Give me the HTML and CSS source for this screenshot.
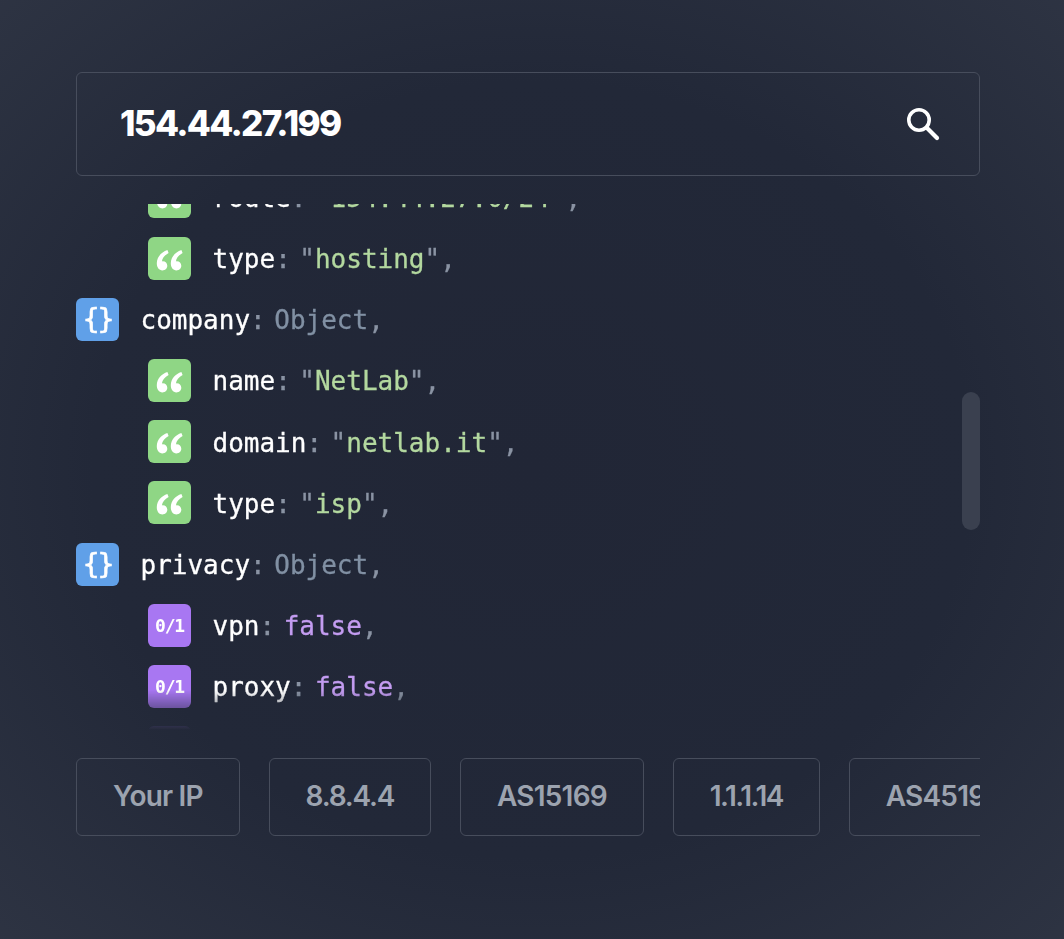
FILE: index.html
```html
<!DOCTYPE html>
<html lang="en">
<head>
<meta charset="utf-8">
<title>IP lookup</title>
<link rel="stylesheet" href="styles.css">
</head>
<body>
<main class="page">
  <div class="search">
    <span class="search-value">154.44.27.199</span>
    <svg class="search-icon" viewBox="0 0 34 34" aria-hidden="true"><circle cx="13" cy="13" r="10.2" fill="none" stroke="#fff" stroke-width="3.6"/><path d="M20.8 20.8 L31 31" fill="none" stroke="#fff" stroke-width="4.2" stroke-linecap="round"/></svg>
  </div>
  <div class="viewer">
    <div class="scroller">
      <div class="tree">
        <div class="row child"><span class="icon str"><svg viewBox="0 0 43 43"><use href="#q"/></svg></span><span class="key">route</span><span class="colon">:</span><span class="punct">"</span><span class="string">154.44.27.0/24</span><span class="punct">",</span></div>
        <div class="row child"><span class="icon str"><svg viewBox="0 0 43 43"><use href="#q"/></svg></span><span class="key">type</span><span class="colon">:</span><span class="punct">"</span><span class="string">hosting</span><span class="punct">",</span></div>
        <div class="row"><span class="icon obj">{}</span><span class="key">company</span><span class="colon">:</span><span class="object">Object</span><span class="punct">,</span></div>
        <div class="row child"><span class="icon str"><svg viewBox="0 0 43 43"><use href="#q"/></svg></span><span class="key">name</span><span class="colon">:</span><span class="punct">"</span><span class="string">NetLab</span><span class="punct">",</span></div>
        <div class="row child"><span class="icon str"><svg viewBox="0 0 43 43"><use href="#q"/></svg></span><span class="key">domain</span><span class="colon">:</span><span class="punct">"</span><span class="string">netlab.it</span><span class="punct">",</span></div>
        <div class="row child"><span class="icon str"><svg viewBox="0 0 43 43"><use href="#q"/></svg></span><span class="key">type</span><span class="colon">:</span><span class="punct">"</span><span class="string">isp</span><span class="punct">",</span></div>
        <div class="row"><span class="icon obj">{}</span><span class="key">privacy</span><span class="colon">:</span><span class="object">Object</span><span class="punct">,</span></div>
        <div class="row child"><span class="icon bool">0/1</span><span class="key">vpn</span><span class="colon">:</span><span class="boolean">false</span><span class="punct">,</span></div>
        <div class="row child"><span class="icon bool">0/1</span><span class="key">proxy</span><span class="colon">:</span><span class="boolean">false</span><span class="punct">,</span></div>
        <div class="row child"><span class="icon bool">0/1</span><span class="key">tor</span><span class="colon">:</span><span class="boolean">false</span><span class="punct">,</span></div>
      </div>
    </div>
    <div class="thumb"></div>
  </div>
  <div class="chips">
    <button class="chip chip-word">Your IP</button>
    <button class="chip chip-digits">8.8.4.4</button>
    <button class="chip chip-as">AS15169</button>
    <button class="chip chip-ones">1.1.1.14</button>
    <button class="chip chip-as">AS45195</button>
  </div>
</main>
<svg class="defs" width="0" height="0" aria-hidden="true"><defs>
  <g id="q" fill="#fff">
    <path d="M19.4 13 C13.6 15 9 19.6 8.8 26 C8.7 30.4 11 33.4 14.4 33.4 C17.2 33.4 19.3 31.4 19.3 28.7 C19.3 26.1 17.4 24.2 14.9 24.2 C14.5 24.2 14.2 24.3 13.9 24.4 C14.3 21 16.8 18.2 20.6 16 Z"/>
    <path d="M33.4 13 C27.6 15 23 19.6 22.8 26 C22.7 30.4 25 33.4 28.4 33.4 C31.2 33.4 33.3 31.4 33.3 28.7 C33.3 26.1 31.4 24.2 28.9 24.2 C28.5 24.2 28.2 24.3 27.9 24.4 C28.3 21 30.8 18.2 34.6 16 Z"/>
  </g>
</defs></svg>
</body>
</html>
```

FILE: styles.css
```css
* { box-sizing: border-box; }
html, body { margin: 0; height: 100%; }
body {
  background: radial-gradient(ellipse 75% 75% at 50% 50%, #212636 0%, #222838 55%, #2f3544 100%);
  overflow: hidden;
}
.page { padding: 72px 84px 0 76px; width: 1064px; }
.search {
  height: 104px;
  border: 1px solid #474d5c;
  border-radius: 6px;
  display: flex;
  align-items: center;
  justify-content: space-between;
  padding: 0 39px 0 43px;
}
.search-value {
  font: 800 35px "Inter", sans-serif;
  letter-spacing: -1.68px;
  color: #fff;
  padding-bottom: 2px;
}
.search-icon { width: 34px; height: 34px; }
.viewer { position: relative; margin-top: 28px; }
.scroller {
  height: 526px;
  overflow: hidden;
  -webkit-mask-image: linear-gradient(to bottom, #000 0, #000 486px, transparent 526px);
  mask-image: linear-gradient(to bottom, #000 0, #000 486px, transparent 526px);
}
.tree { margin-top: -28.6px; display: flex; flex-direction: column; gap: 18.2px; }
.row {
  display: flex;
  align-items: center;
  height: 43px;
  font: 400 26px "DejaVu Sans Mono", monospace;
  -webkit-text-stroke: .3px currentColor;
  white-space: pre;
}
.child { padding-left: 72px; }
.key, .colon, .punct, .string, .object, .boolean { padding-top: 2px; }
.icon {
  width: 43px;
  height: 43px;
  border-radius: 6px;
  margin-right: 21.5px;
  display: flex;
  align-items: center;
  justify-content: center;
  color: #fff;
  flex: none;
  -webkit-text-stroke: 0;
}
.icon svg { width: 43px; height: 43px; display: block; }
.str { background: #8fd685; }
.obj { background: #60a0e8; font-size: 28px; letter-spacing: -2px; -webkit-text-stroke: .6px #fff; }
.bool { background: #a877f2; font-size: 18px; font-weight: 700; letter-spacing: -1.2px; }
.key { color: #fff; }
.colon { color: #8a93a3; margin-right: 8.5px; }
.punct { color: #8a93a3; }
.string { color: #b3d89f; }
.object { color: #8190a3; }
.boolean { color: #c39cf0; }
.thumb {
  position: absolute;
  right: 0;
  top: 188px;
  width: 18px;
  height: 138px;
  border-radius: 9px;
  background: #3a404f;
}
.chips {
  margin-top: 28px;
  display: flex;
  gap: 28.8px;
  overflow: hidden;
}
.chip {
  flex: none;
  height: 78px;
  padding: 0 36px 2px;
  background: transparent;
  border: 1px solid #474d5c;
  border-radius: 6px;
  font: 600 28px "Inter", sans-serif;
  color: #9ca3af;
}
.chip-word { letter-spacing: -.8px; }
.chip-digits { letter-spacing: -1.2px; }
.chip-as { letter-spacing: -.8px; }
.chip-ones { letter-spacing: -1.5px; }
.defs { position: absolute; }
```
